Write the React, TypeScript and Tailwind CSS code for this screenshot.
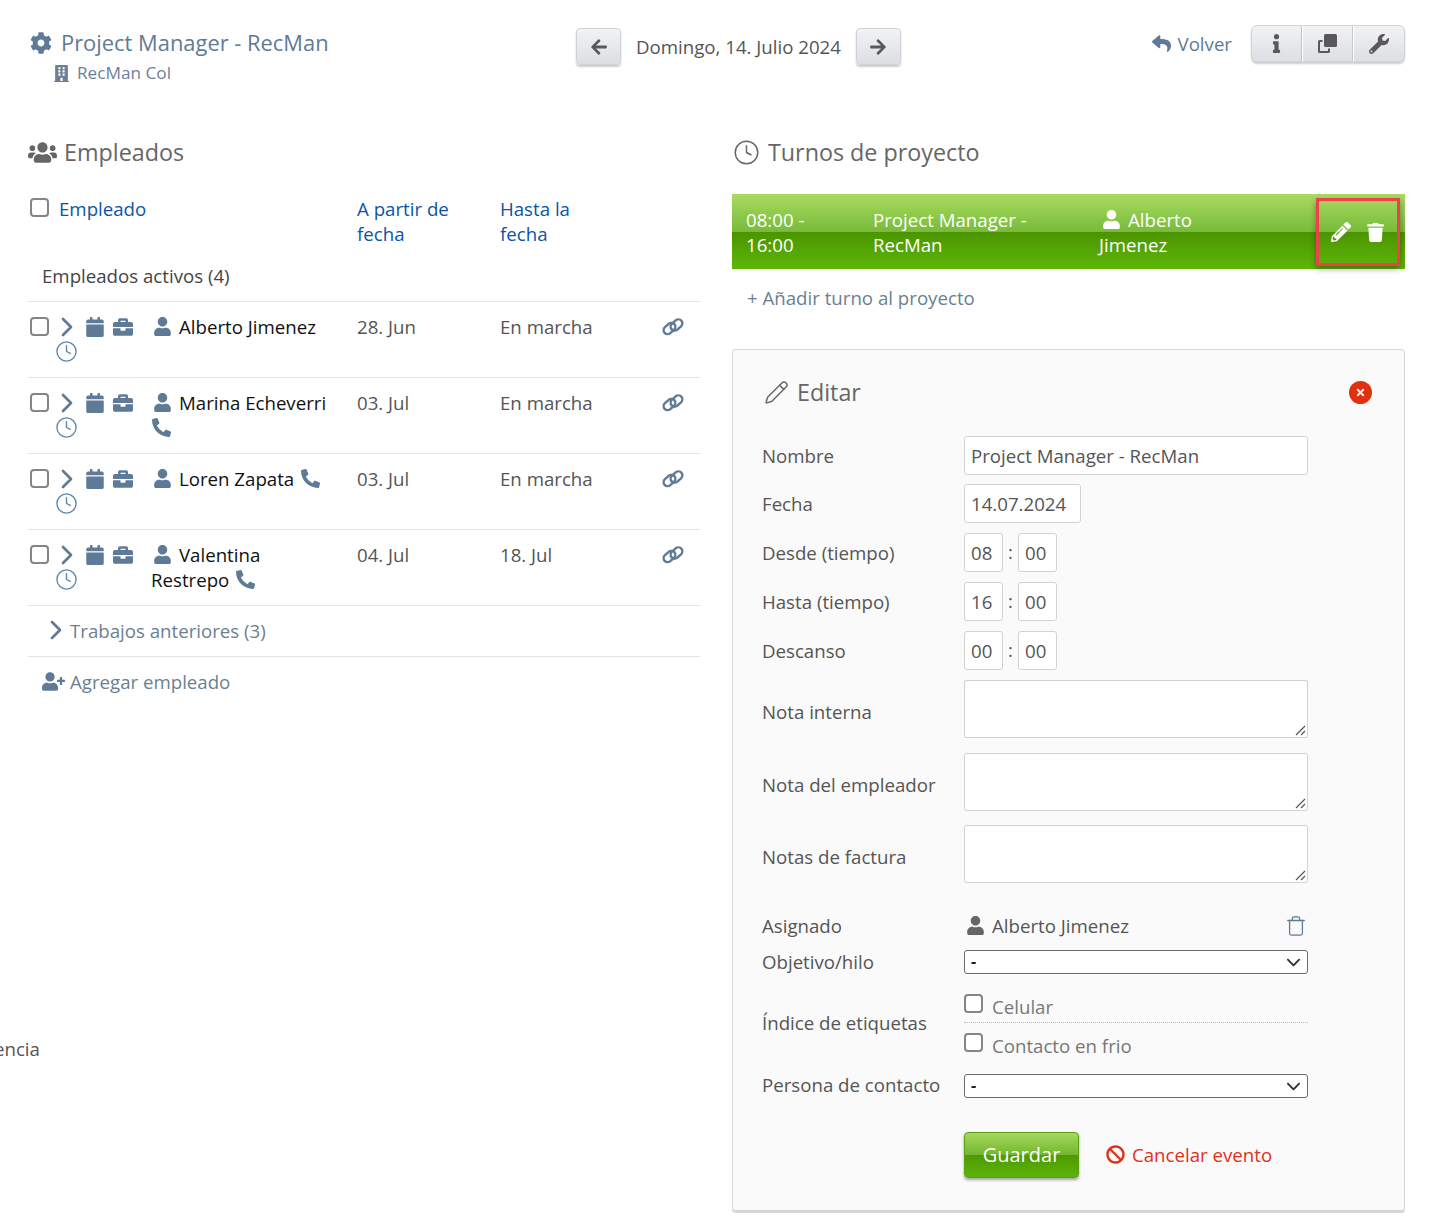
import {
  FaArrowLeft,
  FaArrowRight,
  FaBan,
  FaBriefcase,
  FaBuilding,
  FaCalendar,
  FaCog,
  FaInfo,
  FaPencilAlt,
  FaPhoneAlt,
  FaReply,
  FaTimes,
  FaTrash,
  FaUser,
  FaUserPlus,
  FaUsers,
  FaWrench,
} from "react-icons/fa"
import { FaChevronDown } from "react-icons/fa6"
import { LuChevronRight, LuClock, LuPencil, LuTrash } from "react-icons/lu"

const employees = [
  { first: "Alberto Jimenez", from: "28. Jun", to: "En marcha" },
  { first: "Marina Echeverri", phone: "below", from: "03. Jul", to: "En marcha" },
  { first: "Loren Zapata", phone: "inline", from: "03. Jul", to: "En marcha" },
  { first: "Valentina", second: "Restrepo", phone: "second", from: "04. Jul", to: "18. Jul" },
]

function Checkbox({ className = "" }: { className?: string }) {
  return <span className={`block w-[19px] h-[19px] rounded-[4px] border-2 border-[#858585] bg-white shrink-0 ${className}`} />
}

function GrayButton({ children, className = "" }: { children: React.ReactNode; className?: string }) {
  return (
    <button className={`flex items-center justify-center bg-gradient-to-b from-[#f1f2f4] to-[#dcdfe3] border border-[#d0d2d6] text-[#595959] shadow-[0_2px_2px_rgba(0,0,0,0.2)] ${className}`}>
      {children}
    </button>
  )
}

function IconLink() {
  return (
    <svg width="24" height="20" viewBox="0 0 24 20" fill="none" stroke="#5f7a96" strokeWidth="2.4" className="mt-[3px]">
      <rect x="2" y="7.500" width="13" height="8" rx="4" transform="rotate(-42 8.500 11.500)" />
      <rect x="9" y="4" width="13" height="8" rx="4" transform="rotate(-42 15.500 8)" />
    </svg>
  )
}

function IconClone() {
  return (
    <svg width="21" height="21" viewBox="0 0 21 21" fill="#595959">
      <rect x="7" y="1" width="13" height="13" rx="1.5" />
      <path d="M1 8.500A1.500 1.500 0 0 1 2.500 7H5.500v2H3v9h8v-2.500h2V18.500A1.500 1.500 0 0 1 11.500 20h-9A1.500 1.500 0 0 1 1 18.500z" />
    </svg>
  )
}

function EmployeeRow({ e }: { e: (typeof employees)[number] }) {
  const phone = <FaPhoneAlt className="inline text-[#5f7a96] text-[19px] align-[-2px]" />
  return (
    <div className="flex h-[76px] border-b border-[#e3e3e3] pt-[12px] leading-[25px]">
      <div className="w-[123px] shrink-0">
        <div className="flex items-center h-[25px] pl-[2px]">
          <Checkbox />
          <LuChevronRight className="text-[#5f7a96] text-[32px] ml-[2px] shrink-0" />
          <FaCalendar className="text-[#5f7a96] text-[20px] ml-[1.5px] shrink-0" />
          <FaBriefcase className="text-[#5f7a96] text-[20px] ml-[8.5px] shrink-0" />
        </div>
        <LuClock className="text-[#5b87ab] text-[23px] ml-[27px] mt-[1px]" strokeWidth={1.4} />
      </div>
      <div className="w-[206px] shrink-0 text-[#111]">
        <FaUser className="inline text-[#5f7a96] text-[19px] ml-[2px] mr-[7px] align-[-2px]" />
        {e.first}
        {e.phone === "inline" && <span className="ml-[7px]">{phone}</span>}
        {e.phone === "below" && <div className="ml-[1px]">{phone}</div>}
        {e.second && (
          <div>
            {e.second} <span className="ml-[2px]">{phone}</span>
          </div>
        )}
      </div>
      <div className="w-[143px] shrink-0 text-[#555]">{e.from}</div>
      <div className="w-[161px] shrink-0 text-[#555]">{e.to}</div>
      <IconLink />
    </div>
  )
}

function Field({ label, children, className = "", labelClass = "" }: { label: string; children: React.ReactNode; className?: string; labelClass?: string }) {
  return (
    <div className={`flex items-center ${className}`}>
      <div className={`w-[202px] shrink-0 text-[#555] ${labelClass}`}>{label}</div>
      {children}
    </div>
  )
}

function Box({ value, className = "" }: { value: string; className?: string }) {
  return (
    <div className={`flex items-center h-[39px] px-[6px] bg-white border border-[#d2d2d2] rounded-[3px] text-[#555] ${className}`}>
      {value}
    </div>
  )
}

function TimeField({ label, hour, minute }: { label: string; hour: string; minute: string }) {
  return (
    <Field label={label} className="mb-[10px]">
      <Box value={hour} className="w-[39px]" />
      <span className="w-[15px] text-center text-[#555] -mt-[3px]">:</span>
      <Box value={minute} className="w-[39px]" />
    </Field>
  )
}

function TextArea({ label, className = "" }: { label: string; className?: string }) {
  return (
    <Field label={label} className={className} labelClass="pt-[5px]">
      <div className="relative w-[344px] h-[58px] bg-white border border-[#d2d2d2] rounded-[2px]">
        <svg className="absolute right-[1px] bottom-[1px]" width="12" height="12" viewBox="0 0 12 12" stroke="#555" strokeWidth="1.2">
          <path d="M2 11 11 2M7 11l4-4" />
        </svg>
      </div>
    </Field>
  )
}

function SelectBox() {
  return (
    <div className="flex items-center justify-between w-[344px] h-[24px] pl-[6px] pr-[6px] bg-white border border-[#6b6b6b] rounded-[3px] text-[#222]">
      <span className="text-[16px] font-bold">-</span>
      <FaChevronDown className="text-[15px] text-[#333]" />
    </div>
  )
}

export default function App() {
  return (
    <div className="relative w-[1430px] h-[1226px] overflow-hidden bg-white text-[18.67px] leading-[25px] font-['Open_Sans',sans-serif]">
      <span className="absolute left-[-6px] top-[1036px] text-[#555]">encia</span>

      <header className="flex h-[94px] pl-[30px] pr-[25px]">
        <div className="w-[546px] pt-[28px]">
          <div className="flex items-center text-[#5f7a96] text-[21.9px] leading-[30px]">
            <FaCog className="text-[22px] mr-[9px]" />
            Project Manager - RecMan
          </div>
          <div className="flex items-center text-[#6d8097] text-[17.2px] leading-[24px] ml-[23px] mt-[3px]">
            <FaBuilding className="text-[17px] mr-[7px]" />
            RecMan Col
          </div>
        </div>
        <div className="flex items-start pt-[28px] w-[549px]">
          <GrayButton className="w-[45px] h-[37px] rounded-[4px] text-[18px]">
            <FaArrowLeft />
          </GrayButton>
          <span className="mx-[15px] leading-[38px] text-[#555] whitespace-nowrap">Domingo, 14. Julio 2024</span>
          <GrayButton className="w-[45px] h-[37px] rounded-[4px] text-[18px]">
            <FaArrowRight />
          </GrayButton>
        </div>
        <div className="flex items-start pt-[25px] ml-auto">
          <div className="flex items-center h-[37px] text-[#5f7a96] mr-[19px]">
            <FaReply className="text-[19px] mr-[7px]" />
            Volver
          </div>
          <div className="flex">
            <GrayButton className="w-[51px] h-[37px] rounded-l-[6px] text-[19px]">
              <FaInfo />
            </GrayButton>
            <GrayButton className="w-[51px] h-[37px] border-l-white">
              <IconClone />
            </GrayButton>
            <GrayButton className="w-[52px] h-[37px] rounded-r-[6px] border-l-white text-[20px]">
              <FaWrench />
            </GrayButton>
          </div>
        </div>
      </header>

      <main className="flex pl-[28px] pr-[25px] pt-[42px] gap-[32px]">
        <section className="w-[672px] shrink-0">
          <h2 className="flex items-center text-[23.3px] leading-[32px] text-[#666] font-normal mb-[28px]">
            <FaUsers className="text-[29px] mr-[7px] text-[#666]" />
            Empleados
          </h2>
          <div className="flex h-[68px]">
            <div className="w-[329px] flex items-start pl-[2px]">
              <Checkbox className="mt-[2px]" />
              <span className="ml-[10px] text-[#0a55a8]">Empleado</span>
            </div>
            <div className="w-[143px] text-[#0a55a8]">
              A partir de
              <br />
              fecha
            </div>
            <div className="text-[#0a55a8]">
              Hasta la
              <br />
              fecha
            </div>
          </div>
          <div className="pl-[14px] text-[#444] h-[38px] border-b border-[#e3e3e3] leading-[24px]">Empleados activos (4)</div>

          {employees.map(e => (
            <EmployeeRow key={e.first} e={e} />
          ))}

          <div className="flex items-center h-[51px] pb-[2px] border-b border-[#e3e3e3] text-[#6b7f93] pl-[14px]">
            <LuChevronRight className="text-[32px] text-[#5f7a96] -ml-[2px] mr-[-2px]" />
            Trabajos anteriores (3)
          </div>
          <div className="flex items-center h-[48px] text-[#6b7f93] pl-[14px]">
            <FaUserPlus className="text-[#5f7a96] text-[23px] mr-[5px]" />
            Agregar empleado
          </div>
        </section>

        <section className="flex-1">
          <h2 className="flex items-center text-[23.3px] leading-[32px] text-[#666] font-normal mb-[26px]">
            <LuClock className="text-[27px] ml-[1px] mr-[8px] text-[#666]" strokeWidth={1.3} />
            Turnos de proyecto
          </h2>

          <div className="relative flex h-[75px] pt-[13px] pl-[14px] text-white bg-[linear-gradient(to_bottom,#a9db60_0%,#78bb3a_50%,#4b9400_50%,#5cb608_100%)]">
            <div className="w-[127px]">
              08:00 -
              <br />
              16:00
            </div>
            <div className="w-[225px]">
              Project Manager -
              <br />
              RecMan
            </div>
            <div className="w-[170px] pl-[1px]">
              <FaUser className="inline text-[19px] ml-[3px] mr-[7px] align-[-2px]" />
              Alberto
              <br />
              Jimenez
            </div>
            {/* highlighted by the author of the screenshot */}
            <div className="absolute right-[5px] top-[4px] w-[84px] h-[68px] flex items-center justify-center gap-[15px] border-[3px] border-[#f0404a] shadow-[0_3px_6px_rgba(0,0,0,0.35)]">
              <FaPencilAlt className="text-[20px]" />
              <FaTrash className="text-[19px]" />
            </div>
          </div>

          <div className="pl-[15px] pt-[16px] pb-[39px] text-[#6b7f93]">+ Añadir turno al proyecto</div>

          <div className="h-[864px] pl-[29px] pt-[26px] bg-[#fafafa] border border-[#d7d7d7] border-b-[3px] rounded-[4px]">
            <div className="flex items-center h-[32px] mb-[28px] pr-[32px]">
              <LuPencil className="text-[25px] text-[#666] mr-[8px] ml-[2px]" strokeWidth={1.4} />
              <span className="text-[23.3px] text-[#666]">Editar</span>
              <span className="ml-auto flex items-center justify-center w-[23px] h-[23px] rounded-full bg-[#df3110] text-white text-[11px]">
                <FaTimes />
              </span>
            </div>

            <Field label="Nombre" className="mb-[9px]">
              <Box value="Project Manager - RecMan" className="w-[344px]" />
            </Field>
            <Field label="Fecha" className="mb-[10px]">
              <Box value="14.07.2024" className="w-[117px]" />
            </Field>
            <TimeField label="Desde (tiempo)" hour="08" minute="00" />
            <TimeField label="Hasta (tiempo)" hour="16" minute="00" />
            <TimeField label="Descanso" hour="00" minute="00" />
            <TextArea label="Nota interna" className="mb-[15px]" />
            <TextArea label="Nota del empleador" className="mb-[14px]" />
            <TextArea label="Notas de factura" />

            <Field label="Asignado" className="mt-[30px] mb-[11px]">
              <div className="flex items-center w-[344px] text-[#555]">
                <FaUser className="text-[19px] text-[#666] ml-[2px] mr-[7px]" />
                Alberto Jimenez
                <LuTrash className="ml-auto mr-[1px] text-[22px] text-[#5f7a96]" strokeWidth={1.4} />
              </div>
            </Field>
            <Field label="Objetivo/hilo" className="mb-[12px]">
              <SelectBox />
            </Field>
            <Field label="Índice de etiquetas" labelClass="pb-[4px]">
              <div className="w-[344px] text-[#777]">
                <div className="flex items-start h-[37px] pt-[8px] border-b border-dotted border-[#bbb]">
                  <Checkbox className="mr-[9px]" />
                  Celular
                </div>
                <div className="flex items-start h-[39px] pt-[10px]">
                  <Checkbox className="mr-[9px]" />
                  Contacto en frio
                </div>
              </div>
            </Field>
            <Field label="Persona de contacto" className="mt-[10px]" labelClass="pb-[2px]">
              <SelectBox />
            </Field>

            <div className="flex items-center ml-[202px] mt-[33px]">
              <button className="w-[115px] h-[46px] rounded-[4px] border border-[#5a9e12] pb-[2px] text-white text-[20px] bg-[linear-gradient(to_bottom,#a6d95e_0%,#72b52e_50%,#4f9900_50%,#5cb40a_100%)] shadow-[0_2px_3px_rgba(0,0,0,0.35)]">
                Guardar
              </button>
              <span className="flex items-center ml-[27px] pb-[2px] text-[#e0301e]">
                <FaBan className="text-[19px] mr-[7px]" />
                Cancelar evento
              </span>
            </div>
          </div>
        </section>
      </main>
    </div>
  )
}
